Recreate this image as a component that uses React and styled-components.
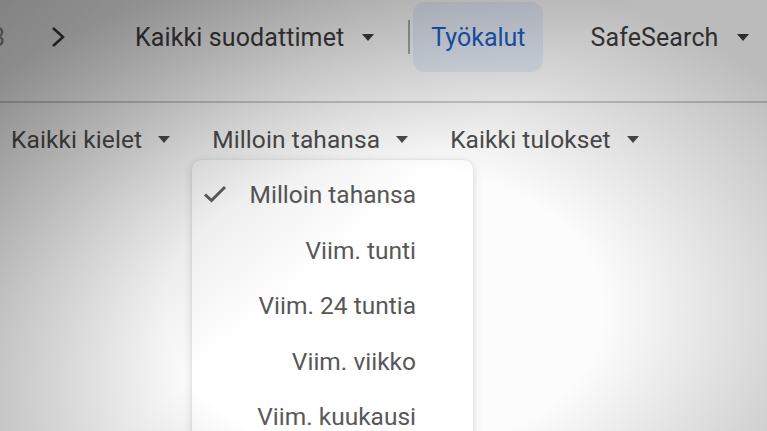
import styled, { createGlobalStyle } from "styled-components";

const GlobalStyle = createGlobalStyle`
  html, body {
    margin: 0;
    padding: 0;
    background: #fbfbfb;
  }
  body {
    font-family: Roboto, "Liberation Sans", sans-serif;
  }
`;

const Page = styled.div`
  position: relative;
  width: 767px;
  height: 431px;
  overflow: hidden;
  background: #fcfcfc;
`;

const TopBar = styled.div`
  display: flex;
  align-items: center;
  height: 70px;
  padding-top: 2px;
  padding-bottom: 29px;
  border-bottom: 2px solid #cdcdcd;
  white-space: nowrap;
`;

const Cut = styled.span`
  margin-left: -9px;
  font-size: 25px;
  color: #8a8a8a;
`;

const Chevron = styled.svg`
  margin-left: 45px;
  width: 16px;
  height: 22px;
`;

const Filter = styled.div`
  display: flex;
  align-items: center;
  gap: ${(p) => p.$gap || 16}px;
  margin-left: ${(p) => p.$ml || 0}px;
  font-size: ${(p) => p.$size || 24.5}px;
  color: ${(p) => p.$color || "#4d4d4d"};
  letter-spacing: 0.1px;
`;

const Caret = styled.span`
  width: 0;
  height: 0;
  border-left: 6.5px solid transparent;
  border-right: 6.5px solid transparent;
  border-top: 7px solid currentColor;
`;

const Divider = styled.div`
  width: 2px;
  height: 34px;
  margin-left: 34px;
  background: #a9a9a9;
`;

const Chip = styled.div`
  display: flex;
  align-items: center;
  height: 70px;
  margin-left: 3px;
  padding: 0 17px 0 18px;
  border-radius: 12px;
  background: #e8effb;
  color: #1d5fc8;
  font-size: 25px;
`;

const FilterRow = styled.div`
  display: flex;
  align-items: center;
  gap: 42px;
  padding: 21px 0 0 11px;
  height: 30px;
  white-space: nowrap;
`;

const Menu = styled.div`
  position: absolute;
  left: 192px;
  top: 160px;
  width: 281px;
  padding-top: 7px;
  background: #ffffff;
  border-radius: 9px;
  box-shadow: 0 2px 10px rgba(0, 0, 0, 0.16), 0 0 2px rgba(0, 0, 0, 0.08);
`;

const Item = styled.div`
  display: grid;
  grid-template-columns: 40px 1fr;
  align-items: center;
  height: 55.5px;
  padding: 0 57px 0 11px;
  font-size: 24.5px;
  color: #585858;
  white-space: nowrap;
`;

const ItemText = styled.span`
  text-align: right;
`;

const Vignette = styled.div`
  position: absolute;
  inset: 0;
  pointer-events: none;
  background:
    radial-gradient(ellipse 68% 80% at 50% 72%, rgba(0, 0, 0, 0) 42%, rgba(0, 0, 0, 0.26) 100%),
    linear-gradient(140deg, rgba(0, 0, 0, 0.3) 0%, rgba(0, 0, 0, 0.1) 30%, rgba(0, 0, 0, 0) 50%);
`;

const Check = () => (
  <svg width="24" height="18" viewBox="0 0 24 18">
    <path d="M2 9.5 L8.5 15.5 L22 2" fill="none" stroke="#5f5f5f" strokeWidth="3" />
  </svg>
);

const options = [
  "Milloin tahansa",
  "Viim. tunti",
  "Viim. 24 tuntia",
  "Viim. viikko",
  "Viim. kuukausi",
];

export default function App() {
  return (
    <Page>
      <GlobalStyle />
      <TopBar>
        <Cut>3</Cut>
        <Chevron viewBox="0 0 16 22">
          <path d="M3 2 L13 11 L3 20" fill="none" stroke="#3a3a3a" strokeWidth="2.6" />
        </Chevron>
        <Filter $ml={69} $gap={18} $size={25} $color="#3d3d3d">
          Kaikki suodattimet
          <Caret />
        </Filter>
        <Divider />
        <Chip>Työkalut</Chip>
        <Filter $ml={48} $gap={19} $size={25} $color="#3d3d3d">
          SafeSearch
          <Caret />
        </Filter>
      </TopBar>
      <FilterRow>
        <Filter>
          Kaikki kielet
          <Caret />
        </Filter>
        <Filter>
          Milloin tahansa
          <Caret />
        </Filter>
        <Filter>
          Kaikki tulokset
          <Caret />
        </Filter>
      </FilterRow>
      <Menu>
        {options.map((o, i) => (
          <Item key={o}>
            <span>{i === 0 && <Check />}</span>
            <ItemText>{o}</ItemText>
          </Item>
        ))}
      </Menu>
      <Vignette />
    </Page>
  );
}
